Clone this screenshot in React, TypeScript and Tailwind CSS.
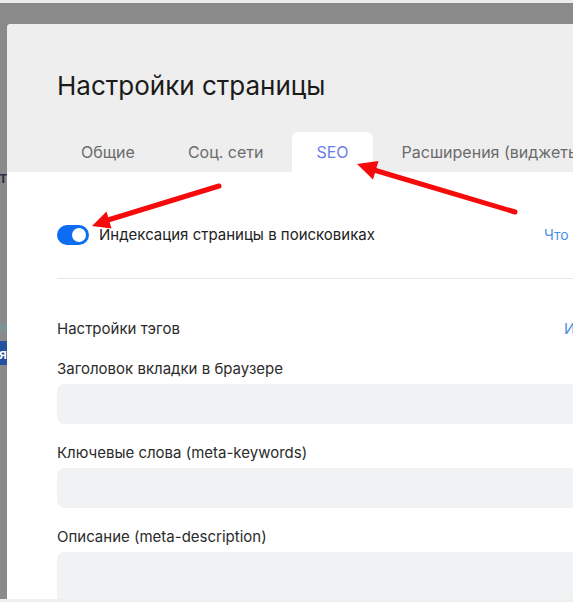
import React from 'react';

const tabs = ['Общие', 'Соц. сети', 'SEO', 'Расширения (виджеты)'];

function Field({ label, tall = false }: { label: string; tall?: boolean }) {
  return (
    <div className="mb-[19px]">
      <div className="h-5 text-[15px] leading-5 text-[#2b2b2b] whitespace-nowrap">{label}</div>
      <div className={`mt-[5px] rounded-lg bg-[#f1f2f4] ${tall ? 'h-[90px]' : 'h-10'}`} />
    </div>
  );
}

function Arrows() {
  return (
    <svg className="pointer-events-none absolute left-0 top-0" width={573} height={602} viewBox="0 0 573 602">
      <g stroke="#f50b0b" strokeWidth={5} strokeLinecap="round" fill="#f50b0b">
        <line x1={219} y1={186} x2={108} y2={220} />
        <line x1={515} y1={212} x2={374} y2={170} />
      </g>
      <polygon points="92,226 111.5,228.5 106.5,211.5" fill="#f50b0b" />
      <polygon points="357,164 378.5,161 373,179.5" fill="#f50b0b" />
    </svg>
  );
}

export default function App() {
  return (
    <div className="relative h-[602px] w-[573px] overflow-hidden bg-[#efefef] font-['Inter','Noto_Sans',sans-serif]">
      <div className="h-[3px] bg-[#ececec]" />
      <div className="flex h-[596px] bg-[#8a8a8a]">
        {/* page behind the overlay */}
        <div className="w-[7px] shrink-0 overflow-hidden">
          <div className="mt-[167px] flex justify-end text-[15px] font-semibold leading-4 text-[#2a3142]">іт</div>
          <div className="mt-[134px] flex justify-end text-[11px] leading-4 text-[#5aa7a6]">п</div>
          <div className="mt-[5px] flex h-6 items-center justify-end bg-[#2351a0] text-[14px] font-semibold text-white">я</div>
        </div>

        {/* modal */}
        <div className="mt-[21px] w-[640px] shrink-0 overflow-hidden rounded-tl-[4px] bg-white">
          <div className="bg-[#eeeeee] pl-[50px] pt-[46px]">
            <h1 className="text-[26px] leading-8 font-normal text-[#1b1b1b]">Настройки страницы</h1>
            <div className="mt-[30px] flex gap-[5px]">
              {tabs.map(t => (
                <div
                  key={t}
                  className={`flex h-10 items-center whitespace-nowrap rounded-t-md px-6 text-[16px] ${
                    t === 'SEO' ? 'bg-white text-[#6a80e6]' : 'text-[#6b6b6b]'
                  }`}
                >
                  {t}
                </div>
              ))}
            </div>
          </div>

          <div className="px-[50px] pt-[53px]">
            <div className="grid h-5 grid-cols-[487px_1fr] items-center">
              <div className="flex h-5 items-center gap-[10px]">
                <div className="flex h-5 w-8 items-center justify-end rounded-full bg-[#0c6cf2] pr-[3px]">
                  <div className="h-[14px] w-[14px] rounded-full bg-white" />
                </div>
                <span className="whitespace-nowrap text-[15px] leading-5 text-[#222222]">Индексация страницы в поисковиках</span>
              </div>
              <a className="whitespace-nowrap text-[14px] leading-5 text-[#4a8fe0]">Что это?</a>
            </div>

            <div className="mt-[33px] border-t border-[#e6e6e6]" />

            <div className="mt-10 grid grid-cols-[507px_1fr] items-center">
              <div className="h-5 text-[15px] leading-5 text-[#2b2b2b]">Настройки тэгов</div>
              <a className="whitespace-nowrap text-[15px] leading-5 text-[#4a8fe0]">Изменить</a>
            </div>

            <div className="mt-5">
              <Field label="Заголовок вкладки в браузере" />
              <Field label="Ключевые слова (meta-keywords)" />
              <Field label="Описание (meta-description)" tall />
            </div>
          </div>
        </div>
      </div>
      <div className="h-[3px] bg-[#efefef]" />
      <Arrows />
    </div>
  );
}
